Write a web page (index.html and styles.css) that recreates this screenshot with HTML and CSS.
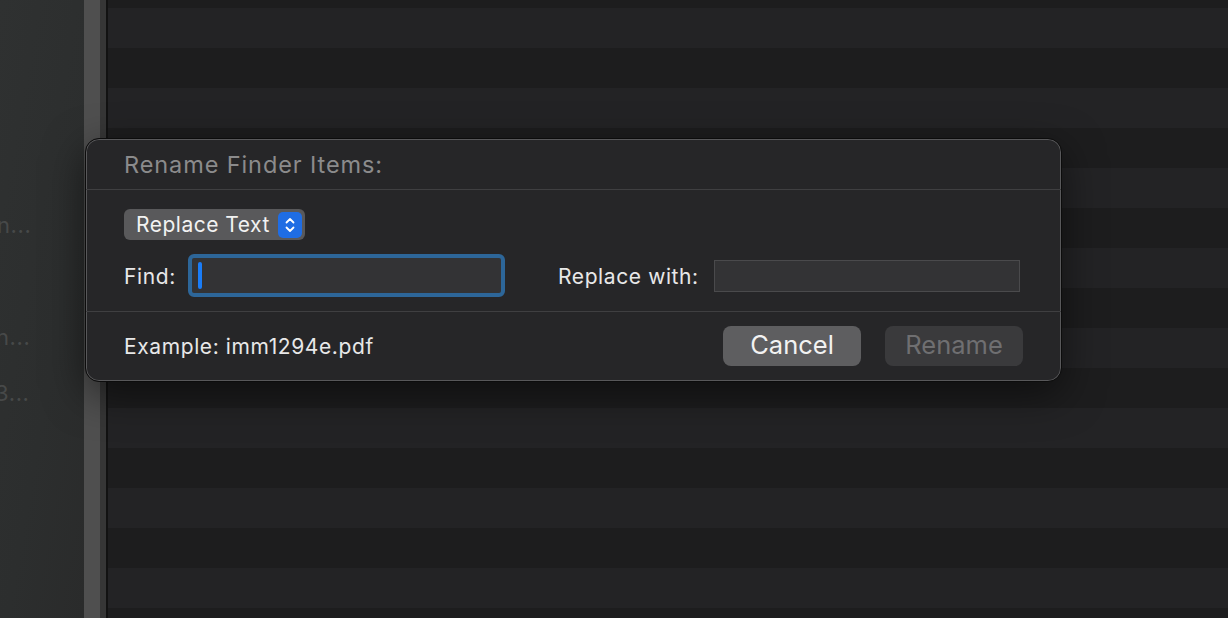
FILE: index.html
```html
<!DOCTYPE html>
<html>
<head>
<meta charset="utf-8">
<link rel="stylesheet" href="styles.css">
</head>
<body>
<div class="app">
  <aside class="sidebar">
    <div class="side-item s1">n...</div>
    <div class="side-item s2">n...</div>
    <div class="side-item s3">3...</div>
  </aside>
  <div class="strip"></div>
  <div class="strip2"></div>
  <div class="divider"></div>
  <main class="list"></main>
</div>

<div class="dialog">
  <div class="dlg-header">Rename Finder Items:</div>
  <div class="dlg-body">
    <div class="popup">
      <span class="popup-label">Replace Text</span>
      <span class="popup-arrows">
        <svg width="12" height="18" viewBox="0 0 12 18"><path d="M2.5 6.5 L6 3 L9.5 6.5 M2.5 11.5 L6 15 L9.5 11.5" fill="none" stroke="#fff" stroke-width="1.8" stroke-linecap="round" stroke-linejoin="round"/></svg>
      </span>
    </div>
    <div class="fields">
      <label class="lbl find-lbl">Find:</label>
      <div class="focus-ring"><div class="field focused"><span class="caret"></span></div></div>
      <label class="lbl repl-lbl">Replace with:</label>
      <div class="field plain"></div>
    </div>
  </div>
  <div class="dlg-footer">
    <div class="example">Example: imm1294e.pdf</div>
    <div class="buttons">
      <button class="btn cancel">Cancel</button>
      <button class="btn rename" disabled>Rename</button>
    </div>
  </div>
</div>
</body>
</html>
```

FILE: styles.css
```css
html, body {
  margin: 0;
  padding: 0;
  width: 1228px;
  height: 618px;
  overflow: hidden;
  background: #1c1c1d;
  font-family: "Inter", "Liberation Sans", sans-serif;
}

.app {
  display: flex;
  height: 618px;
}

.sidebar {
  width: 84px;
  flex: none;
  background: linear-gradient(100deg, #2f3131 0%, #2c2e2e 60%, #2a2b2b 100%);
  position: relative;
  overflow: hidden;
  color: #474949;
  font-size: 22px;
  letter-spacing: 0.6px;
}

.side-item {
  position: absolute;
  left: -3px;
}
.s1 { top: 212px; }
.s2 { top: 324px; left: -4px; }
.s3 { top: 380px; left: -5px; }

.strip {
  width: 16px;
  flex: none;
  background: #4f4f4f;
}
.strip2 {
  width: 6px;
  flex: none;
  background: #363636;
}
.divider {
  width: 2px;
  flex: none;
  background: #121212;
}

.list {
  flex: 1;
  background: repeating-linear-gradient(
    to bottom,
    #1d1d1e 0px, #1d1d1e 8px,
    #232325 8px, #232325 48px,
    #1d1d1e 48px, #1d1d1e 88px
  );
  background-size: 100% 80px;
  background-position: 0 0;
}

.dialog {
  position: absolute;
  left: 85px;
  top: 138px;
  width: 977px;
  height: 244px;
  box-sizing: border-box;
  border: 1px solid #0c0c0c;
  border-radius: 14px;
  background: #262628;
  box-shadow: inset 0 0 0 1px #58585a, 0 12px 40px rgba(0, 0, 0, 0.5);
  display: flex;
  flex-direction: column;
}

.dlg-header {
  height: 51px;
  flex: none;
  box-sizing: border-box;
  padding-left: 38px;
  display: flex;
  align-items: center;
  font-size: 23.5px;
  letter-spacing: 0.9px;
  color: #8b8b8c;
  border-bottom: 1px solid #3f3f41;
}

.dlg-body {
  height: 122px;
  flex: none;
  box-sizing: border-box;
  padding: 19px 38px 0;
  border-bottom: 1px solid #3f3f41;
}

.popup {
  display: inline-flex;
  align-items: center;
  height: 31px;
  width: 181px;
  box-sizing: border-box;
  padding-left: 12px;
  padding-right: 3px;
  background: #59595b;
  border-radius: 6px;
  color: #f2f2f2;
  font-size: 21px;
  letter-spacing: 0.5px;
  justify-content: space-between;
}

.popup-arrows {
  width: 24px;
  height: 26px;
  border-radius: 5px;
  background: #1f6de4;
  display: flex;
  align-items: center;
  justify-content: center;
}

.fields {
  display: flex;
  align-items: center;
  margin-top: 14px;
  height: 43px;
}

.lbl {
  font-size: 21px;
  letter-spacing: 0.6px;
  color: #e8e8e8;
  padding-top: 2px;
}

.find-lbl {
  width: 64px;
}

.focus-ring {
  width: 317px;
  height: 43px;
  box-sizing: border-box;
  border: 4px solid #2d6699;
  border-radius: 6px;
  background: #2d6699;
}

.field {
  box-sizing: border-box;
  background: #333335;
}

.field.focused {
  height: 100%;
  border-radius: 2px;
  display: flex;
  align-items: center;
  padding-left: 6px;
}

.caret {
  width: 4px;
  height: 27px;
  border-radius: 2px;
  background: #1a7df8;
}

.repl-lbl {
  margin-left: 53px;
  width: 156px;
}

.field.plain {
  width: 306px;
  height: 32px;
  border: 1px solid #4a4a4c;
}

.dlg-footer {
  flex: 1;
  display: flex;
  align-items: center;
  justify-content: space-between;
  padding: 0 38px 0 38px;
}

.example {
  font-size: 21px;
  letter-spacing: 0.6px;
  color: #e8e8e8;
}

.buttons {
  display: flex;
  gap: 24px;
  margin-top: -2px;
}

.btn {
  width: 138px;
  height: 40px;
  border: none;
  border-radius: 8px;
  font-family: "Inter", "Liberation Sans", sans-serif;
  font-size: 25.5px;
  padding: 0 0 3px 0;
}

.btn.cancel {
  background: #5e5e60;
  color: #f2f2f2;
}

.btn.rename {
  background: #3a3a3c;
  color: #6f6f71;
}
```
